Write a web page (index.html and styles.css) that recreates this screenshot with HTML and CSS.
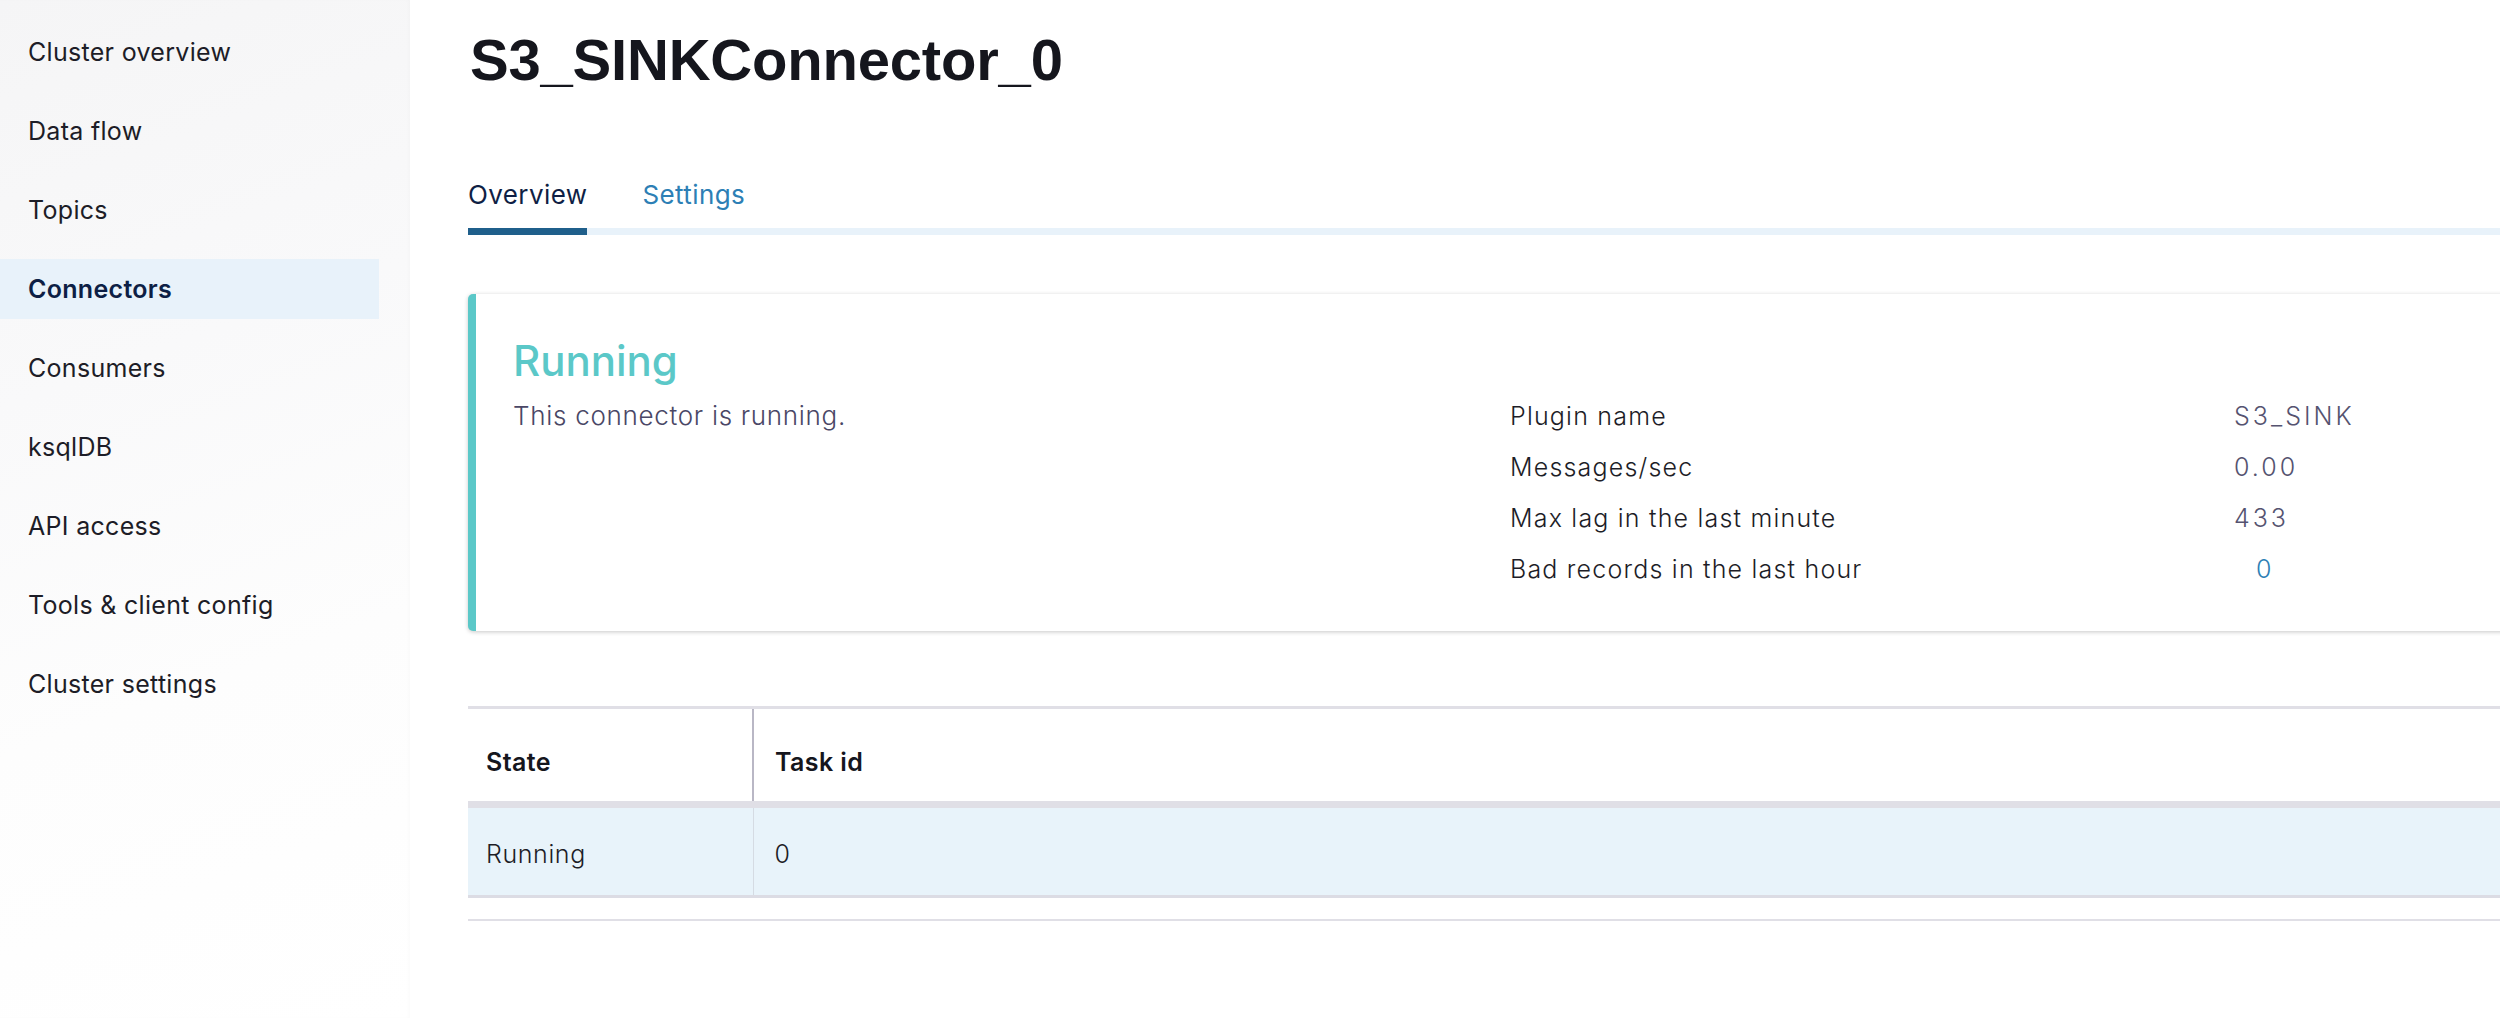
FILE: index.html
```html
<!DOCTYPE html>
<html lang="en">
<head>
<meta charset="utf-8">
<title>S3_SINKConnector_0</title>
<link rel="stylesheet" href="styles.css">
</head>
<body>
<div class="app">
  <nav class="sidebar">
    <ul class="nav">
      <li class="nav-item">Cluster overview</li>
      <li class="nav-item">Data flow</li>
      <li class="nav-item">Topics</li>
      <li class="nav-item nav-item--active">Connectors</li>
      <li class="nav-item">Consumers</li>
      <li class="nav-item">ksqlDB</li>
      <li class="nav-item">API access</li>
      <li class="nav-item">Tools &amp; client config</li>
      <li class="nav-item">Cluster settings</li>
    </ul>
  </nav>
  <main class="main">
    <h1 class="page-title">S3_SINKConnector_0</h1>
    <div class="tabs">
      <div class="tab tab--active">Overview</div>
      <div class="tab">Settings</div>
    </div>
    <section class="status-card">
      <div class="status-main">
        <h2 class="status-title">Running</h2>
        <p class="status-desc">This connector is running.</p>
      </div>
      <dl class="details">
        <dt class="details-label">Plugin name</dt>
        <dd class="details-value">S3_SINK</dd>
        <dt class="details-label">Messages/sec</dt>
        <dd class="details-value">0.00</dd>
        <dt class="details-label">Max lag in the last minute</dt>
        <dd class="details-value">433</dd>
        <dt class="details-label">Bad records in the last hour</dt>
        <dd class="details-value details-value--link">0</dd>
      </dl>
    </section>
    <table class="tasks">
      <thead>
        <tr>
          <th class="col-state">State</th>
          <th>Task id</th>
        </tr>
      </thead>
      <tbody>
        <tr class="row-highlight">
          <td class="col-state">Running</td>
          <td>0</td>
        </tr>
      </tbody>
    </table>
    <div class="table-footer"></div>
  </main>
</div>
</body>
</html>
```

FILE: styles.css
```css
html, body {
  margin: 0;
  padding: 0;
  background: #ffffff;
  overflow: hidden;
}

body {
  font-family: Inter, "Noto Sans", sans-serif;
  color: #1d1d27;
}

.app {
  display: flex;
  width: 2700px;
  height: 1018px;
}

/* Sidebar */
.sidebar {
  flex: 0 0 410px;
  background: linear-gradient(160deg, #f5f5f6 0%, #f9f9fa 35%, #fdfdfd 65%, #ffffff 100%);
  box-shadow: inset -2px 0 3px rgba(0, 0, 0, 0.015);
}

.nav {
  list-style: none;
  margin: 0;
  padding: 22px 31px 0 0;
  display: flex;
  flex-direction: column;
  gap: 19px;
}

.nav-item {
  height: 60px;
  line-height: 60px;
  padding-left: 28px;
  font-size: 25px;
  font-weight: 400;
  letter-spacing: 0.3px;
  color: #1d1d27;
}

.nav-item--active {
  background: #e8f2fa;
  font-weight: 600;
  color: #0d1f45;
}

/* Main */
.main {
  flex: 0 0 auto;
  width: 2150px;
  padding-left: 58px;
}

.page-title {
  margin: 28px 0 0 2px;
  font-family: "Liberation Sans", Arial, sans-serif;
  font-weight: 700;
  font-size: 58px;
  line-height: 64px;
  letter-spacing: -0.2px;
  color: #15161d;
}

.tabs {
  display: flex;
  gap: 55px;
  margin-top: 86px;
  border-bottom: 7px solid #e8f2fa;
}

.tab {
  font-size: 26px;
  line-height: 34px;
  padding-bottom: 16px;
  margin-bottom: -7px;
  border-bottom: 7px solid transparent;
  color: #2d7fb5;
  letter-spacing: 0.4px;
}

.tab--active {
  color: #0f1f45;
  border-bottom-color: #1f5f8b;
}

/* Status card */
.status-card {
  margin-top: 59px;
  display: grid;
  grid-template-columns: 997px 1fr;
  height: 337px;
  box-sizing: border-box;
  padding: 42px 0 0 37px;
  border-left: 8px solid #5bc8c8;
  border-radius: 5px;
  background: #fff;
  box-shadow: 0 1px 4px rgba(0, 0, 0, 0.22);
}

.status-title {
  margin: 0;
  font-size: 42px;
  line-height: 50px;
  font-weight: 500;
  color: #5bc8c8;
}

.status-desc {
  margin: 14px 0 0;
  font-size: 26px;
  line-height: 32px;
  font-weight: 300;
  letter-spacing: 0.7px;
  color: #4a4766;
}

.details {
  margin: 54px 0 0;
  display: grid;
  grid-template-columns: 724px 1fr;
  grid-auto-rows: 51px;
  align-items: center;
  font-size: 25px;
  font-weight: 300;
  letter-spacing: 1.2px;
}

.details-label {
  margin: 0;
  color: #1d1d27;
}

.details-value {
  margin: 0;
  color: #555370;
  letter-spacing: 3px;
}

.details-value--link {
  padding-left: 22px;
  color: #2e7fb5;
}

/* Tasks table */
.tasks {
  margin-top: 75px;
  width: 100%;
  border-collapse: collapse;
  border-top: 3px solid #e0dfe6;
  font-size: 25px;
}

.tasks th {
  text-align: left;
  font-weight: 600;
  line-height: 30px;
  padding: 38px 18px 24px 21px;
  color: #15161d;
  border-bottom: 7px solid #e0dfe6;
  letter-spacing: 0.4px;
}

.tasks th.col-state {
  width: 248px;
  padding-left: 18px;
  border-right: 2px solid #b9b7c5;
}

.tasks td {
  line-height: 30px;
  padding: 31px 18px 26px 21px;
  font-weight: 300;
  letter-spacing: 0.6px;
  color: #1d1d27;
  border-bottom: 3px solid #dcdce4;
}

.tasks td.col-state {
  padding-left: 18px;
  border-right: 1px solid #d5dbe3;
}

.row-highlight {
  background: #e8f3fa;
}

.table-footer {
  height: 21px;
  border-bottom: 2px solid #e0dfe6;
}
```
